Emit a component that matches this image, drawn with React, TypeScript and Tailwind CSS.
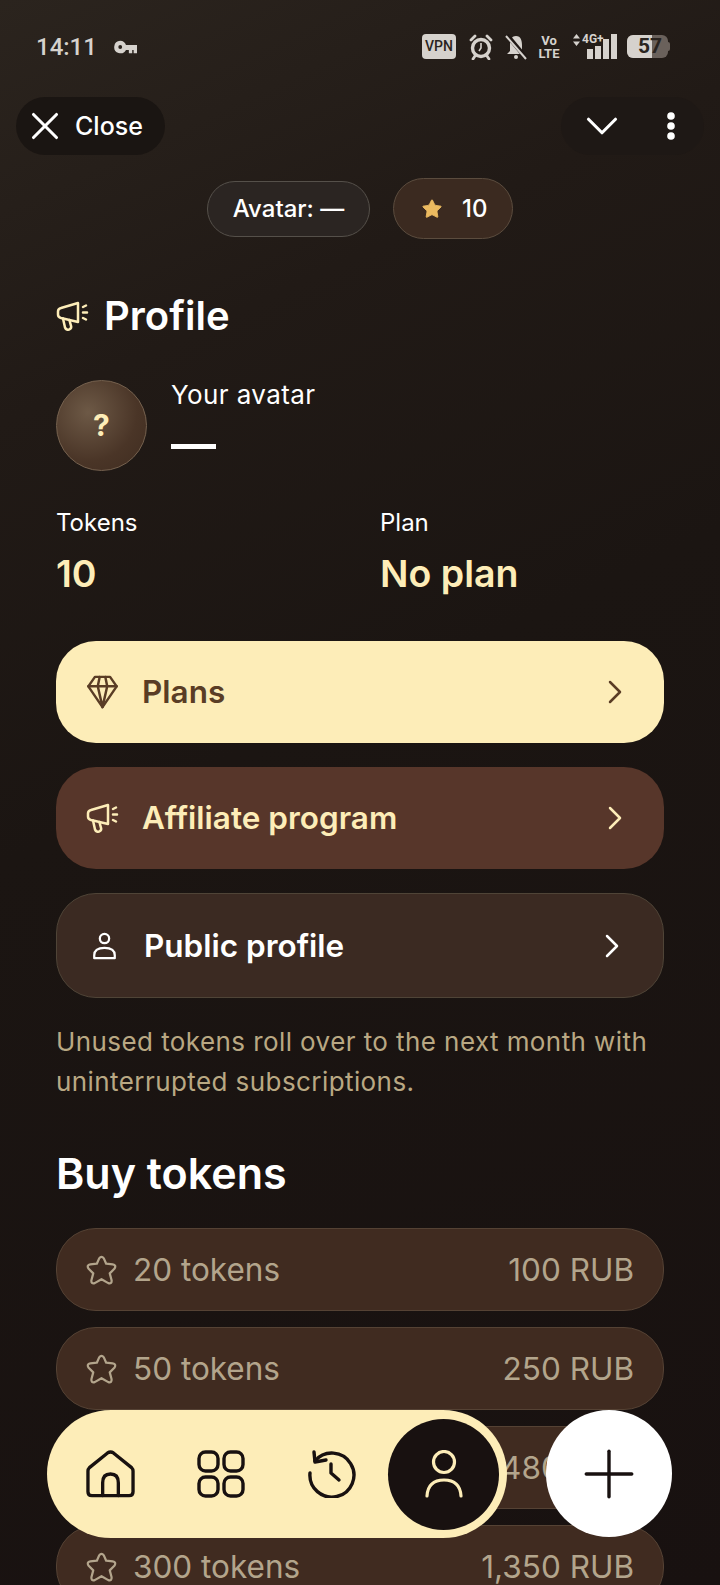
import { ChevronRight, ChevronDown, X, Star, Plus } from "lucide-react";

function Megaphone({ className }: { className?: string }) {
  return (
    <svg viewBox="0 0 33 30" fill="none" stroke="currentColor" strokeWidth="2.5" strokeLinecap="round" strokeLinejoin="round" className={className}>
      <path d="M22 2 V21 L5 17 Q2 16.2 2 13.5 V10.5 Q2 7.8 5 7 Z" />
      <path d="M7 17.6 L9 26.5 Q10 29.4 13 28.6 Q15.8 27.6 15 24.8 L13.4 19" />
      <path d="M27 6 L30 4.5 M27 11.5 L31 11.5 M27 17 L30 18.5" />
    </svg>
  );
}

function Gem({ className }: { className?: string }) {
  return (
    <svg viewBox="0 0 34 36" fill="none" stroke="currentColor" strokeWidth="2.6" strokeLinecap="round" strokeLinejoin="round" className={className}>
      <path d="M9 2 H25 L32 12 L17 34 L2 12 Z" />
      <path d="M2 12 H32 M12 12 L17 34 L22 12 M12 12 L14 2 M22 12 L20 2" />
    </svg>
  );
}

function UserSmall({ className }: { className?: string }) {
  return (
    <svg viewBox="0 0 26 30" fill="none" stroke="currentColor" strokeWidth="2.4" strokeLinecap="round" strokeLinejoin="round" className={className}>
      <circle cx="13" cy="7" r="5" />
      <path d="M2 28 V25 Q2 17 13 17 Q24 17 24 25 V28 Z" />
    </svg>
  );
}

function StarOutline({ className }: { className?: string }) {
  return (
    <svg viewBox="0 0 34 32" fill="none" stroke="currentColor" strokeWidth="2.3" strokeLinecap="round" strokeLinejoin="round" className={className}>
      <path d="M14.6 4 Q17 0.8 19.4 4 L21.8 9.5 L28.5 10.2 Q32.5 11 30.5 14.5 L25.5 19.5 L27.4 26.5 Q27.8 30.5 24 29.5 L17 25.5 L10 29.5 Q6.2 30.5 6.6 26.5 L8.5 19.5 L3.5 14.5 Q1.5 11 5.5 10.2 L12.2 9.5 Z" />
    </svg>
  );
}

function StatusIcons() {
  return (
    <div className="flex items-center text-[#d6d2cd]">
      <span className="flex h-[25px] w-[34px] items-center justify-center rounded-[4px] bg-[#d6d2cd] font-['Roboto',sans-serif] text-[14px] font-medium text-[#2a2420]">VPN</span>
      <svg viewBox="0 0 24 26" className="ml-[13px] h-[26px] w-[24px]" fill="none" stroke="currentColor">
        <circle cx="12" cy="14" r="8.5" strokeWidth="3.4" />
        <path d="M12 9 V14 L10 17" strokeWidth="1.6" />
        <path d="M2 6 L6 2 M22 6 L18 2 M6 22 L4 25 M18 22 L20 25" strokeWidth="2.8" strokeLinecap="round" />
      </svg>
      <svg viewBox="0 0 24 26" className="ml-[11px] h-[26px] w-[24px]" fill="currentColor">
        <path d="M12 2 C7 2 6 7 6 11 V17 L3 20 H21 L18 17 V11 C18 7 17 2 12 2 Z" />
        <circle cx="12" cy="23" r="2" />
        <path d="M3 1 L23 25" stroke="#1f1815" strokeWidth="4.5" />
        <path d="M2 2 L22 25" stroke="currentColor" strokeWidth="2" />
      </svg>
      <span className="ml-[10px] flex w-[22px] flex-col items-center font-['Roboto',sans-serif] text-[13px] leading-[13px] font-bold">
        <span>Vo</span>
        <span>LTE</span>
      </span>
      <span className="relative ml-[13px] flex h-[25px] w-[44px] items-end justify-end gap-[2px]">
        <svg viewBox="0 0 7 12" className="absolute top-0 left-0 h-[12px] w-[7px]" fill="currentColor">
          <path d="M3.5 0 L7 4.5 H0 Z M3.5 12 L0 7.5 H7 Z" />
        </svg>
        <span className="absolute top-[-2px] left-[9px] font-['Roboto',sans-serif] text-[12px] leading-[14px] font-bold">4G+</span>
        <span className="h-[10px] w-[6px] bg-[#d6d2cd]" />
        <span className="h-[13px] w-[6px] bg-[#d6d2cd]" />
        <span className="h-[20px] w-[6px] bg-[#d6d2cd]" />
        <span className="h-[25px] w-[6px] bg-[#d6d2cd]" />
      </span>
      <span className="relative ml-[10px] flex h-[23px] w-[41px] items-center overflow-hidden rounded-[6px] bg-[#6a615b]">
        <span className="h-full w-[25px] bg-[#d6d2cd]" />
        <span className="absolute left-[11px] font-['Roboto',sans-serif] text-[21px] font-bold text-[#2a2420]">57</span>
      </span>
      <span className="h-[9px] w-[2px] rounded-r-[2px] bg-[#6a615b]" />
    </div>
  );
}

const tokenRows = [
  { label: "20 tokens", price: "100 RUB" },
  { label: "50 tokens", price: "250 RUB" },
  { label: "100 tokens", price: "480 RUB" },
  { label: "300 tokens", price: "1,350 RUB" },
];

function BottomNav() {
  return (
    <>
      <div className="absolute top-[1410px] left-[47px] flex h-[128px] w-[460px] items-center rounded-full bg-[#fdedb8] text-[#181110]">
        <svg viewBox="0 0 50 48" fill="none" stroke="currentColor" strokeWidth="3.4" strokeLinejoin="round" strokeLinecap="round" className="ml-[39px] h-[48px] w-[49px]">
          <path d="M2 21 Q2 19 3.5 17.5 L22 2.5 Q25 0.5 28 2.5 L46.5 17.5 Q48 19 48 21 V42 Q48 46 44 46 H6 Q2 46 2 42 Z" />
          <path d="M17 46 V33 Q17 24 25 24 Q33 24 33 33 V46" />
        </svg>
        <svg viewBox="0 0 48 48" fill="none" stroke="currentColor" strokeWidth="3.4" className="ml-[62px] h-[48px] w-[48px]">
          <rect x="2" y="2" width="19" height="19" rx="6.5" />
          <rect x="27" y="2" width="19" height="19" rx="6.5" />
          <rect x="2" y="27" width="19" height="19" rx="6.5" />
          <rect x="27" y="27" width="19" height="19" rx="6.5" />
        </svg>
        <svg viewBox="0 0 48 48" fill="none" stroke="currentColor" strokeWidth="3.4" strokeLinecap="round" strokeLinejoin="round" className="ml-[63px] h-[48px] w-[48px]">
          <path d="M7 11 A22 22 0 1 1 2 23" />
          <path d="M6 2 L7 12 L18 10" />
          <path d="M23 14 V23 L31 30" />
        </svg>
        <div className="ml-[32px] flex h-[111px] w-[111px] items-center justify-center rounded-full bg-[#181110] text-[#fdedb8]">
          <svg viewBox="0 0 38 48" fill="none" stroke="currentColor" strokeWidth="3.2" strokeLinecap="round" className="h-[48px] w-[38px]">
            <circle cx="19" cy="12" r="10.5" />
            <path d="M2 46 Q3 30 19 30 Q35 30 36 46" />
          </svg>
        </div>
      </div>
      <div className="absolute top-[1410px] left-[546px] flex h-[127px] w-[126px] items-center justify-center rounded-full bg-white text-[#181110]">
        <Plus size={78} strokeWidth={1.05} />
      </div>
    </>
  );
}

export default function App() {
  return (
    <div className="relative h-[1585px] w-[720px] overflow-hidden bg-[linear-gradient(155deg,#2b241e_0%,#211a16_22%,#1b1512_45%,#181110_100%)] font-['Inter',sans-serif]">
      <div className="flex h-[97px] items-center justify-between pr-[50px] pb-[4px] pl-[36px]">
        <div className="flex items-center text-[#d6d2cd]">
          <span className="font-['Roboto',sans-serif] text-[24px] font-medium">14:11</span>
          <svg viewBox="0 0 24 14" className="ml-[17px] h-[14px] w-[23px]" fill="currentColor">
            <path d="M6.5 0.5 A6.5 6.5 0 1 0 12.5 10 H15.5 V13.5 H19 V10 H20.5 V13.5 H24 V5 H12.5 A6.5 6.5 0 0 0 6.5 0.5 Z M6.5 5 A2 2 0 1 1 6.5 9 A2 2 0 1 1 6.5 5 Z" fillRule="evenodd" />
          </svg>
        </div>
        <StatusIcons />
      </div>

      <div className="flex items-center justify-between px-[16px]">
        <div className="flex h-[58px] w-[149px] items-center gap-[7px] rounded-full bg-[#1a1512] pl-[6px] text-white">
          <X size={46} strokeWidth={1.6} />
          <span className="text-[25px] leading-none font-medium">Close</span>
        </div>
        <div className="flex h-[58px] w-[143px] items-center gap-[38px] rounded-full bg-[#1e1815] pl-[14px] text-white">
          <ChevronDown size={54} strokeWidth={1.4} />
          <svg viewBox="0 0 8 28" className="h-[28px] w-[8px]" fill="currentColor">
            <circle cx="4" cy="4" r="3.8" />
            <circle cx="4" cy="14" r="3.8" />
            <circle cx="4" cy="24" r="3.8" />
          </svg>
        </div>
      </div>

      <div className="mt-[23px] ml-[207px] flex items-center gap-[23px]">
        <div className="flex h-[56px] w-[163px] items-center justify-center rounded-full border-[1.5px] border-[#55504a] bg-[#2b2522] text-[24px] font-medium text-white">
          Avatar: —
        </div>
        <div className="flex h-[61px] w-[120px] items-center gap-[19px] rounded-full border-[1.5px] border-[#5b4c3e] bg-[#3b2a20] pl-[27px] text-white">
          <Star size={22} fill="#ebba60" stroke="#ebba60" strokeWidth={1} />
          <span className="text-[24px] font-medium">10</span>
        </div>
      </div>

      <div className="px-[56px]">
        <div className="mt-[53px] flex items-center gap-[15px]">
          <Megaphone className="h-[30px] w-[33px] text-[#fdedb8]" />
          <h1 className="text-[40px] leading-[48px] font-semibold text-white">Profile</h1>
        </div>

        <div className="mt-[40px] flex items-start gap-[24px]">
          <div className="flex h-[91px] w-[91px] items-center justify-center rounded-full border-[1.5px] border-[#75614e] bg-[radial-gradient(circle_at_35%_35%,#6d5946_0%,#4a3527_60%,#3f2c20_100%)] text-[30px] font-bold text-[#fdedb8]">
            ?
          </div>
          <div>
            <div className="text-[26px] leading-[30px] tracking-[0.4px] text-white">Your avatar</div>
            <div className="mt-[34px] h-[5px] w-[45px] bg-white" />
          </div>
        </div>

        <div className="mt-[38px] flex">
          <div className="w-[324px]">
            <div className="text-[24px] leading-[28px] text-white">Tokens</div>
            <div className="mt-[15px] text-[37.5px] leading-[44px] font-semibold text-[#fdedb8]">10</div>
          </div>
          <div>
            <div className="text-[24px] leading-[28px] text-white">Plan</div>
            <div className="mt-[15px] text-[37.5px] leading-[44px] font-semibold text-[#fdedb8]">No plan</div>
          </div>
        </div>

        <div className="mt-[45px] flex h-[102px] items-center rounded-[40px] bg-[#fdedb8] pr-[29px] pl-[30px] text-[#5a3d25]">
          <Gem className="h-[34px] w-[33px]" />
          <span className="ml-[23px] flex-1 text-[31.5px] font-semibold">Plans</span>
          <ChevronRight size={40} strokeWidth={1.5} />
        </div>

        <div className="mt-[24px] flex h-[102px] items-center rounded-[40px] bg-[#57362a] pr-[29px] pl-[30px] text-[#fdedb8]">
          <Megaphone className="h-[30px] w-[33px]" />
          <span className="ml-[23px] flex-1 text-[31.5px] font-semibold">Affiliate program</span>
          <ChevronRight size={40} strokeWidth={1.5} />
        </div>

        <div className="mt-[24px] flex h-[105px] items-center rounded-[40px] border-[1.5px] border-[#4f4437] bg-[#3b2a22] pr-[31px] pl-[35px] text-white">
          <UserSmall className="h-[28px] w-[25px]" />
          <span className="ml-[27px] flex-1 text-[31.5px] font-semibold">Public profile</span>
          <ChevronRight size={40} strokeWidth={1.5} />
        </div>

        <p className="mt-[24px] text-[26px] leading-[40px] tracking-[0.42px] text-[#b9a883]">
          Unused tokens roll over to the next month with uninterrupted subscriptions.
        </p>

        <h2 className="mt-[41px] text-[43px] leading-[60px] font-semibold text-white">Buy tokens</h2>

        <div className="mt-[25px] flex flex-col gap-[16px]">
          {tokenRows.map((row) => (
            <div key={row.label} className="flex h-[83px] shrink-0 items-center justify-between rounded-[40px] border-[1.5px] border-[#554234] bg-[#402b20] pr-[29px] pl-[28px] text-[31.5px] text-[#b3a58c]">
              <div className="flex items-center gap-[15px]">
                <StarOutline className="h-[32px] w-[33px]" />
                <span>{row.label}</span>
              </div>
              <span>{row.price}</span>
            </div>
          ))}
        </div>
      </div>

      <BottomNav />
    </div>
  );
}
